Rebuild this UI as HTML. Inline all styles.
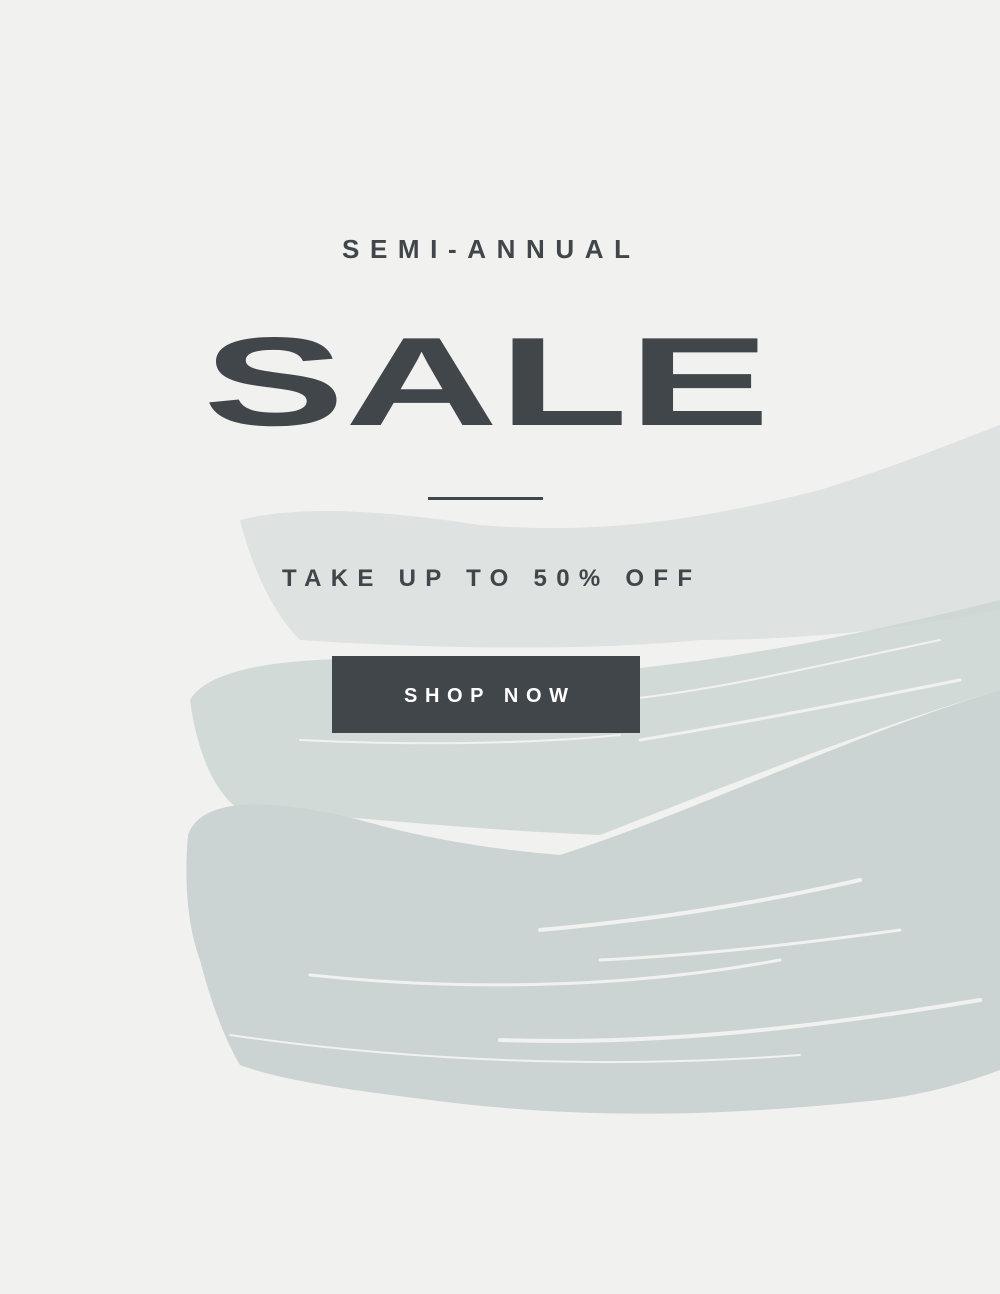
<!DOCTYPE html>
<html><head><meta charset="utf-8"><style>
html,body{margin:0;padding:0;background:#f1f1f0;}
body{width:1000px;height:1294px;position:relative;overflow:hidden;font-family:"Liberation Sans",sans-serif;}
svg{position:absolute;left:0;top:0;}
</style></head><body>
<svg width="1000" height="1294" viewBox="0 0 1000 1294">
<g fill="#cbd4d2">
 <path opacity="0.5" d="M240,520 C300,505 380,510 480,525 C600,535 700,520 820,490 C900,465 960,440 1000,425 L1000,610 C900,630 800,640 700,640 C600,650 450,650 300,640 C270,610 250,560 240,520 Z"/>
 <path opacity="0.8" d="M190,700 C210,665 300,655 420,660 L640,668 C760,655 880,630 1000,600 L1000,690 C880,725 740,780 600,835 C470,830 340,815 240,810 C210,790 195,740 190,700 Z"/>
 <path d="M188,835 C200,800 260,795 360,820 C430,840 500,850 560,855 C700,810 850,735 1000,690 L1000,1070 C960,1085 920,1095 880,1100 C780,1110 620,1125 430,1100 C350,1090 280,1080 240,1065 C225,1040 210,1000 200,960 C185,920 185,870 188,835 Z"/>
</g>
<g stroke="#f1f1f0" stroke-linecap="round" fill="none">
 <path stroke-width="4" d="M540,930 C650,920 750,905 860,880"/>
 <path stroke-width="3" d="M600,960 C700,955 790,945 900,930"/>
 <path stroke-width="3" d="M310,975 C450,990 620,990 780,960"/>
 <path stroke-width="4" d="M500,1040 C650,1045 800,1030 980,1000"/>
 <path stroke-width="2" d="M230,1035 C400,1060 600,1070 800,1055"/>
 <path stroke-width="3" d="M640,740 C760,720 860,700 960,680"/>
 <path stroke-width="2" d="M300,740 C400,745 520,745 620,735"/>
 <path stroke-width="2" d="M620,700 C720,690 820,665 940,640"/>
</g>
<text x="486" y="258" text-anchor="middle" font-family="Liberation Sans" font-weight="bold" font-size="26" fill="#41464a" textLength="288" lengthAdjust="spacing">SEMI-ANNUAL</text>
<text x="203" y="425" font-family="Liberation Sans" font-weight="bold" font-size="126" fill="#41464a" textLength="567" lengthAdjust="spacingAndGlyphs">SALE</text>
<rect x="428" y="497" width="115" height="3" fill="#41464a"/>
<text x="282" y="586" font-family="Liberation Sans" font-weight="bold" font-size="24" fill="#41464a" textLength="410" lengthAdjust="spacing">TAKE UP TO 50% OFF</text>
<rect x="332" y="656" width="308" height="77" fill="#41464a"/>
<text x="404" y="702" font-family="Liberation Sans" font-weight="bold" font-size="20" fill="#ffffff" textLength="164" lengthAdjust="spacing">SHOP NOW</text>
</svg>
</body></html>
